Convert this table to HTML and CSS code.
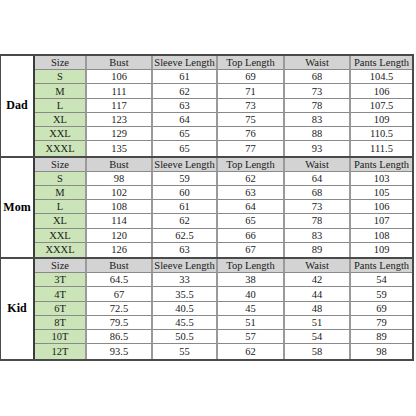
FILE: index.html
```html
<!DOCTYPE html>
<html>
<head>
<meta charset="utf-8">
<link rel="stylesheet" href="styles.css">
</head>
<body>
<div class="chart">
  <div class="section">
    <div class="label">Dad</div>
    <div class="c hd sz">Size</div><div class="c hd">Bust</div><div class="c hd">Sleeve Length</div><div class="c hd">Top Length</div><div class="c hd">Waist</div><div class="c hd last">Pants Length</div>
    <div class="c sz">S</div><div class="c">106</div><div class="c">61</div><div class="c">69</div><div class="c">68</div><div class="c last">104.5</div>
    <div class="c sz">M</div><div class="c">111</div><div class="c">62</div><div class="c">71</div><div class="c">73</div><div class="c last">106</div>
    <div class="c sz">L</div><div class="c">117</div><div class="c">63</div><div class="c">73</div><div class="c">78</div><div class="c last">107.5</div>
    <div class="c sz">XL</div><div class="c">123</div><div class="c">64</div><div class="c">75</div><div class="c">83</div><div class="c last">109</div>
    <div class="c sz">XXL</div><div class="c">129</div><div class="c">65</div><div class="c">76</div><div class="c">88</div><div class="c last">110.5</div>
    <div class="c sz bot">XXXL</div><div class="c bot">135</div><div class="c bot">65</div><div class="c bot">77</div><div class="c bot">93</div><div class="c bot last">111.5</div>
  </div>
  <div class="section">
    <div class="label">Mom</div>
    <div class="c hd sz">Size</div><div class="c hd">Bust</div><div class="c hd">Sleeve Length</div><div class="c hd">Top Length</div><div class="c hd">Waist</div><div class="c hd last">Pants Length</div>
    <div class="c sz">S</div><div class="c">98</div><div class="c">59</div><div class="c">62</div><div class="c">64</div><div class="c last">103</div>
    <div class="c sz">M</div><div class="c">102</div><div class="c">60</div><div class="c">63</div><div class="c">68</div><div class="c last">105</div>
    <div class="c sz">L</div><div class="c">108</div><div class="c">61</div><div class="c">64</div><div class="c">73</div><div class="c last">106</div>
    <div class="c sz">XL</div><div class="c">114</div><div class="c">62</div><div class="c">65</div><div class="c">78</div><div class="c last">107</div>
    <div class="c sz">XXL</div><div class="c">120</div><div class="c">62.5</div><div class="c">66</div><div class="c">83</div><div class="c last">108</div>
    <div class="c sz bot">XXXL</div><div class="c bot">126</div><div class="c bot">63</div><div class="c bot">67</div><div class="c bot">89</div><div class="c bot last">109</div>
  </div>
  <div class="section">
    <div class="label">Kid</div>
    <div class="c hd sz">Size</div><div class="c hd">Bust</div><div class="c hd">Sleeve Length</div><div class="c hd">Top Length</div><div class="c hd">Waist</div><div class="c hd last">Pants Length</div>
    <div class="c sz">3T</div><div class="c">64.5</div><div class="c">33</div><div class="c">38</div><div class="c">42</div><div class="c last">54</div>
    <div class="c sz">4T</div><div class="c">67</div><div class="c">35.5</div><div class="c">40</div><div class="c">44</div><div class="c last">59</div>
    <div class="c sz">6T</div><div class="c">72.5</div><div class="c">40.5</div><div class="c">45</div><div class="c">48</div><div class="c last">69</div>
    <div class="c sz">8T</div><div class="c">79.5</div><div class="c">45.5</div><div class="c">51</div><div class="c">51</div><div class="c last">79</div>
    <div class="c sz">10T</div><div class="c">86.5</div><div class="c">50.5</div><div class="c">57</div><div class="c">54</div><div class="c last">89</div>
    <div class="c sz bot">12T</div><div class="c bot">93.5</div><div class="c bot">55</div><div class="c bot">62</div><div class="c bot">58</div><div class="c bot last">98</div>
  </div>
</div>
</body>
</html>
```
FILE: styles.css
```css
html, body {
  margin: 0;
  padding: 0;
  background: #ffffff;
}
body {
  padding-top: 54px;
}
.chart {
  box-sizing: border-box;
  width: 414px;
  border: 2px solid #4a4a4a;
  border-left-width: 1px;
  font-family: "Liberation Serif", serif;
  font-size: 10.5px;
  color: #1a1a1a;
}
.section {
  display: grid;
  grid-template-columns: 34px 52px 66px 65px 67px 66px 61px;
  grid-template-rows: repeat(7, 1fr);
  height: 101.5px;
  box-sizing: border-box;
  border-bottom: 2px solid #4a4a4a;
}
.section:last-child {
  border-bottom: none;
  height: 99.5px;
}
.label {
  grid-row: 1 / 8;
  grid-column: 1;
  box-sizing: border-box;
  border-right: 2px solid #3c3c3c;
  display: flex;
  align-items: center;
  justify-content: center;
  font-family: "Liberation Serif", serif;
  font-weight: bold;
  font-size: 12px;
  color: #000;
}
.c {
  box-sizing: border-box;
  border-right: 2px solid #9a9a9a;
  border-bottom: 1px solid #8a8a8a;
  display: flex;
  align-items: center;
  justify-content: center;
  white-space: nowrap;
  overflow: hidden;
  background: #ffffff;
}
.c.last {
  border-right: none;
}
.c.bot {
  border-bottom: none;
}
.hd {
  background: #d3d3d3;
}
.sz {
  background: #cbe5b8;
}
.hd.sz {
  background: #d3d3d3;
}
```
